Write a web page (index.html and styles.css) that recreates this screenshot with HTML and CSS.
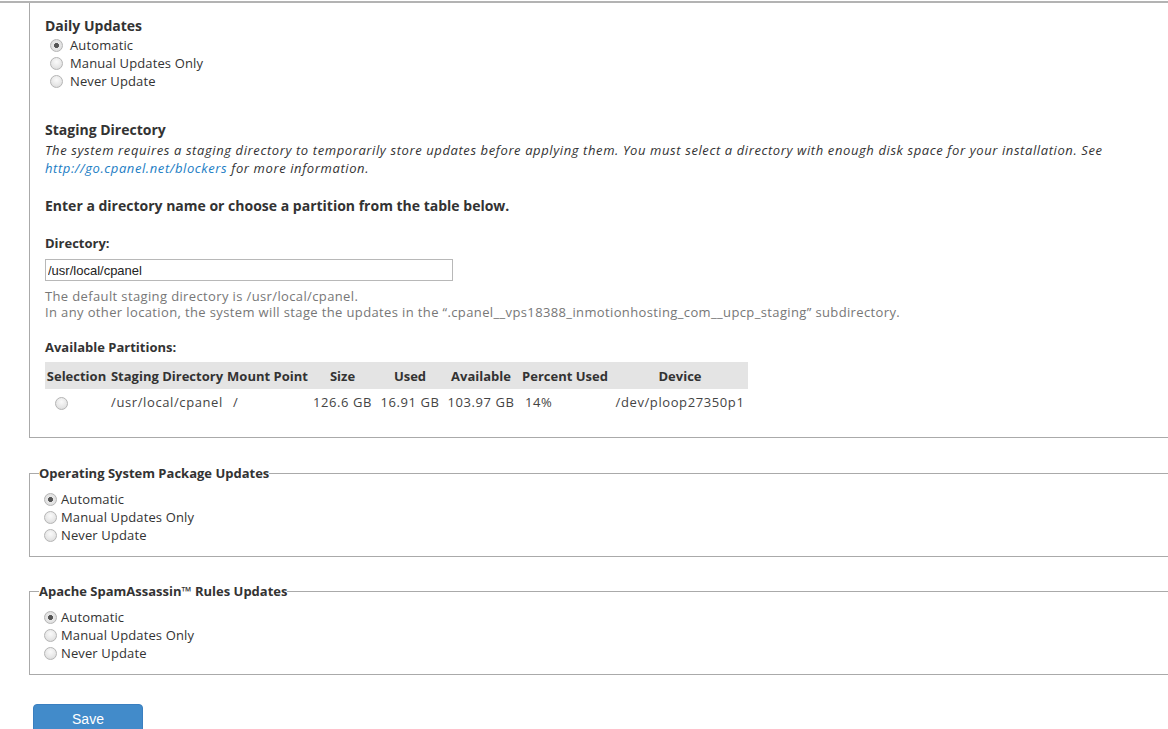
FILE: index.html
```html
<!DOCTYPE html>
<html>
<head>
<meta charset="utf-8">
<link rel="stylesheet" href="styles.css">
</head>
<body>
<div class="rule"></div>
<div class="panel">
  <h3 class="title">Daily Updates</h3>
  <div class="options">
    <label class="opt"><input type="radio" name="daily" checked> Automatic</label>
    <label class="opt"><input type="radio" name="daily"> Manual Updates Only</label>
    <label class="opt"><input type="radio" name="daily"> Never Update</label>
  </div>

  <h3 class="title staging">Staging Directory</h3>
  <p class="desc">The system requires a staging directory to temporarily store updates before applying them. You must select a directory with enough disk space for your installation. See <a href="#">http://go.cpanel.net/blockers</a> for more information.</p>

  <h3 class="title enter">Enter a directory name or choose a partition from the table below.</h3>

  <div class="label">Directory:</div>
  <input class="dir" type="text" value="/usr/local/cpanel">
  <p class="help">The default staging directory is /usr/local/cpanel.<br>In any other location, the system will stage the updates in the “.cpanel__vps18388_inmotionhosting_com__upcp_staging” subdirectory.</p>

  <div class="label parts">Available Partitions:</div>
  <table class="ptable">
    <colgroup>
      <col class="c-sel"><col class="c-dir"><col class="c-mnt"><col class="c-size"><col class="c-used"><col class="c-avail"><col class="c-pct"><col class="c-dev">
    </colgroup>
    <thead>
      <tr><th>Selection</th><th>Staging Directory</th><th>Mount Point</th><th>Size</th><th>Used</th><th>Available</th><th>Percent Used</th><th>Device</th></tr>
    </thead>
    <tbody>
      <tr><td class="sel"><input type="radio" name="part"></td><td>/usr/local/cpanel</td><td class="left">/</td><td>126.6 GB</td><td>16.91 GB</td><td>103.97 GB</td><td class="left">14%</td><td>/dev/ploop27350p1</td></tr>
    </tbody>
  </table>
</div>

<fieldset class="group">
  <legend>Operating System Package Updates</legend>
  <label class="opt"><input type="radio" name="os" checked> Automatic</label>
  <label class="opt"><input type="radio" name="os"> Manual Updates Only</label>
  <label class="opt"><input type="radio" name="os"> Never Update</label>
</fieldset>

<fieldset class="group">
  <legend>Apache SpamAssassin™ Rules Updates</legend>
  <label class="opt"><input type="radio" name="sa" checked> Automatic</label>
  <label class="opt"><input type="radio" name="sa"> Manual Updates Only</label>
  <label class="opt"><input type="radio" name="sa"> Never Update</label>
</fieldset>

<div class="actions">
  <button class="save" type="button">Save</button>
</div>
</body>
</html>
```
FILE: styles.css
```css
html, body {
  margin: 0;
  padding: 0;
  overflow: hidden;
  background: #fff;
}
body {
  font-family: "Open Sans", "Liberation Sans", sans-serif;
  font-size: 13px;
  line-height: 18px;
  color: #333;
}
.rule {
  height: 1px;
  border-bottom: 2px solid #b3b3b3;
}
.panel {
  margin-left: 29px;
  border-left: 1px solid #aaa;
  border-bottom: 1px solid #aaa;
  padding: 13px 15px 22px 15px;
}
.title {
  margin: 0;
  font-size: 14px;
  line-height: 20px;
  font-weight: bold;
}
.options {
  display: flex;
  flex-direction: column;
}
.panel .opt {
  padding-left: 5px;
}
.opt {
  display: flex;
  align-items: center;
  height: 18px;
  letter-spacing: 0.12px;
}
input[type="radio"] {
  appearance: none;
  -webkit-appearance: none;
  width: 13px;
  height: 13px;
  margin: 0 4px 0 0;
  border: 1px solid #b5b5b5;
  border-radius: 50%;
  background: radial-gradient(circle at 50% 35%, #fafafa 0%, #e6e6e6 60%, #d4d4d4 100%);
  box-sizing: border-box;
  flex: none;
}
.panel .opt input[type="radio"] {
  margin-right: 7px;
}
input[type="radio"]:checked {
  background: radial-gradient(circle, #555 0, #555 2.2px, #e8e8e8 2.8px, #d8d8d8 100%);
}
.staging {
  margin-top: 30px;
}
.desc {
  margin: 1px 0 0 0;
  font-style: italic;
  letter-spacing: 0.6px;
}
.desc a {
  color: #1b7dc4;
  text-decoration: none;
}
.enter {
  margin-top: 19px;
}
.label {
  font-weight: bold;
  margin-top: 18px;
}
.dir {
  display: block;
  margin-top: 7px;
  width: 408px;
  height: 22px;
  box-sizing: border-box;
  border: 1px solid #b8b8b8;
  padding: 0 2px;
  font-family: "Liberation Sans", Arial, sans-serif;
  font-size: 13px;
  color: #222;
}
.help {
  margin: 7px 0 0 0;
  line-height: 16px;
  color: #777;
  letter-spacing: 0.37px;
}
.parts {
  margin-top: 18px;
}
.ptable {
  margin-top: 6px;
  border-collapse: collapse;
  table-layout: fixed;
  width: 703px;
}
.c-sel { width: 63px; }
.c-dir { width: 118px; }
.c-mnt { width: 83px; }
.c-size { width: 67px; }
.c-used { width: 68px; }
.c-avail { width: 74px; }
.c-pct { width: 94px; }
.c-dev { width: 136px; }
.ptable th {
  background: #e4e4e4;
  height: 27px;
  padding: 0;
  font-weight: bold;
  text-align: center;
  white-space: nowrap;
}
.ptable td {
  height: 26px;
  padding: 0;
  white-space: nowrap;
  text-align: center;
  color: #444;
  letter-spacing: 0.6px;
}
.ptable td.left {
  text-align: left;
  padding-left: 7px;
}
.ptable td.sel {
  text-align: left;
  padding-left: 10px;
}
.ptable td.sel input {
  margin: 0;
  vertical-align: middle;
}
.group {
  margin: 26px 0 0 29px;
  padding: 8px 9px 12px 9px;
  border: 1px solid #aaa;
  border-right: none;
  display: flex;
  flex-direction: column;
}
.group + .group {
  margin-top: 25px;
}
.group legend {
  padding: 0;
  font-weight: bold;
  line-height: 18px;
}
.group .opt {
  padding-left: 5px;
}
.actions {
  margin: 29px 0 0 33px;
}
.save {
  width: 110px;
  height: 34px;
  border: 1px solid #3a7fc0;
  border-radius: 4px;
  background: #428bca;
  color: #fff;
  font-family: "Liberation Sans", Arial, sans-serif;
  font-size: 14px;
  padding: 0 0 4px 0;
}
```
